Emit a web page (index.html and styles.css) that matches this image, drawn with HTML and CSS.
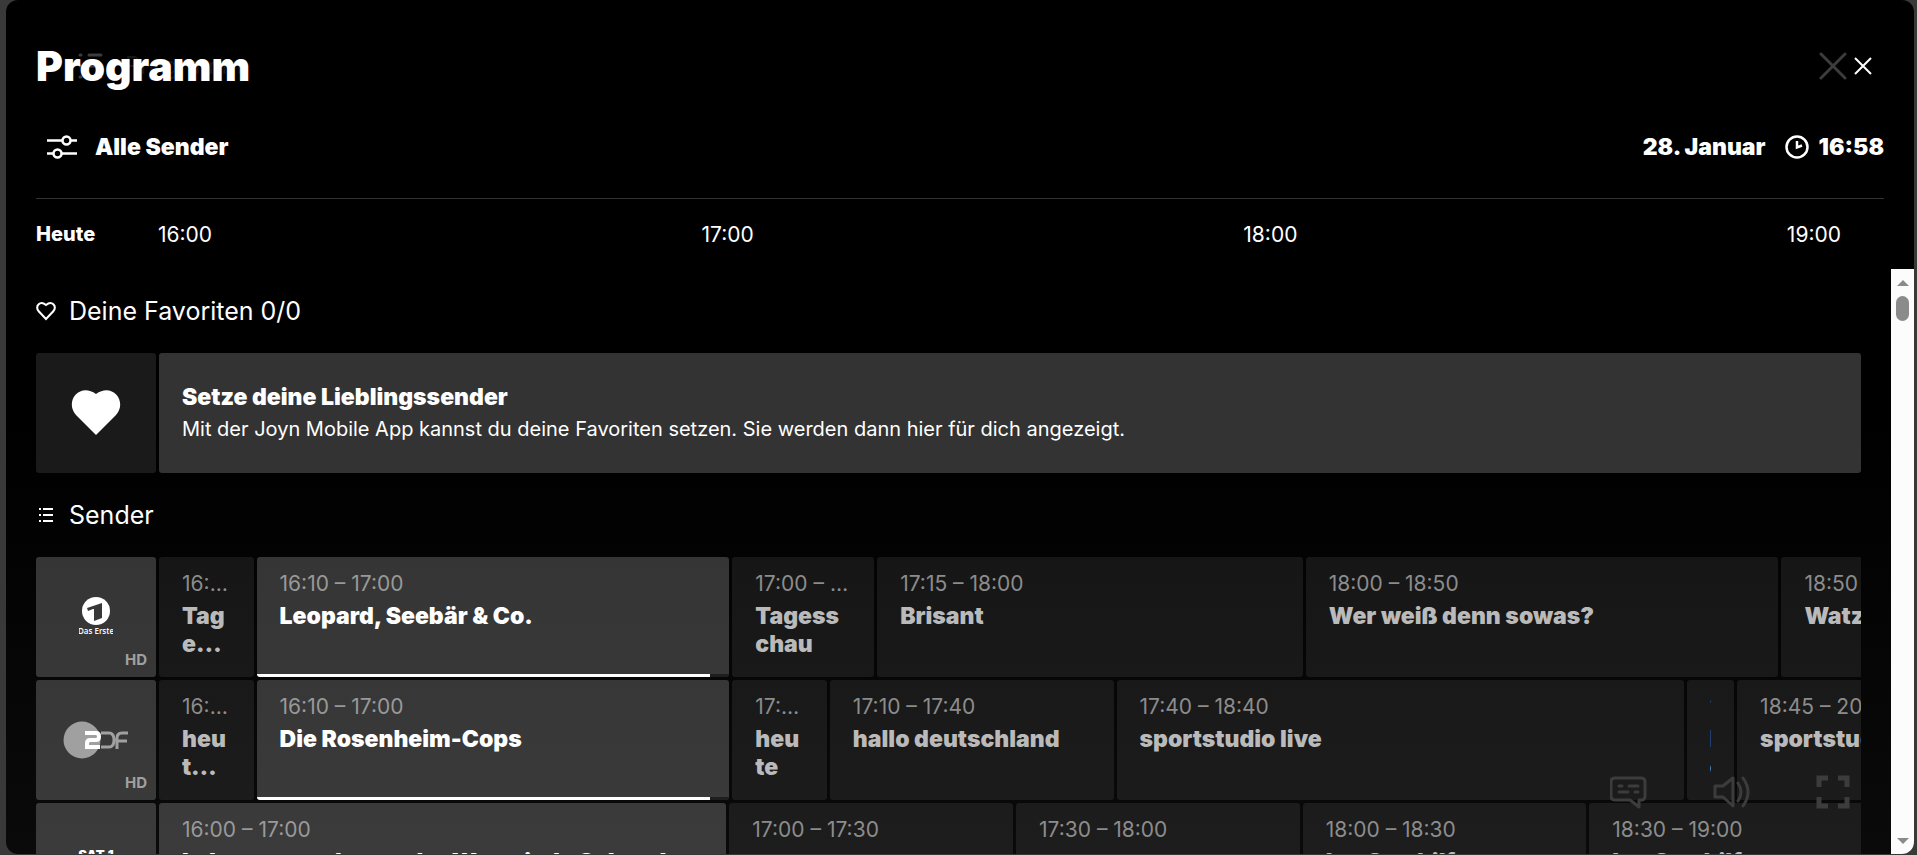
FILE: index.html
```html
<!DOCTYPE html>
<html lang="de">
  <head>
    <meta charset="UTF-8" />
    <meta name="viewport" content="width=device-width, initial-scale=1.0" />
    <title>Programm</title>
    <link rel="stylesheet" href="styles.css">
  </head>
  <body>
    <main class="panel">
      <header class="header">
        <div class="title_row">
          <h1 class="title">Programm</h1>
          <button class="close" aria-label="Schließen">
            <svg width="18" height="18" viewBox="0 0 18 18"><path d="M1 1l16 16M17 1L1 17" /></svg>
          </button>
        </div>
        <div class="filter_row">
          <button class="filter">
            <svg width="32" height="24" viewBox="0 0 32 24">
              <path d="M1 5.500h15M25 5.500h6M1 18.500h6M16 18.500h15" />
              <circle cx="20.500" cy="5.500" r="4" />
              <circle cx="11.500" cy="18.500" r="4" />
            </svg>
            <span>Alle Sender</span>
          </button>
          <div class="date">
            <span>28. Januar</span>
            <svg width="24" height="24" viewBox="0 0 24 24">
              <circle cx="12" cy="12" r="10.500" />
              <path d="M12 6v6.500l5-2" />
            </svg>
            <span>16:58</span>
          </div>
        </div>
        <div class="time_row">
          <span class="today">Heute</span>
          <div class="hours">
            <span>16:00</span>
            <span>17:00</span>
            <span>18:00</span>
            <span>19:00</span>
          </div>
        </div>
      </header>

      <div class="body">
        <div class="content">
          <h2 class="section">
            <svg width="20" height="20" viewBox="0 0 20 20"><path d="M10 18L2.500 10C-1 5 4-1 10 4 16-1 21 5 17.500 10z" /></svg>
            <span>Deine Favoriten 0/0</span>
          </h2>
          <div class="row">
            <div class="logo logo_dark">
              <svg width="50" height="46" viewBox="0 0 50 46"><path fill="#fff" d="M25 45L5 25C-7 11 9-8 25 4 41-8 57 11 45 25z" /></svg>
            </div>
            <div class="hint">
              <h3>Setze deine Lieblingssender</h3>
              <p>Mit der Joyn Mobile App kannst du deine Favoriten setzen. Sie werden dann hier für dich angezeigt.</p>
            </div>
          </div>

          <h2 class="section">
            <svg class="list" width="20" height="18" viewBox="0 0 20 18"><path d="M3 3h2M7 3h10M3 9h2M7 9h10M3 15h2M7 15h10" /></svg>
            <span>Sender</span>
          </h2>

          <div class="row">
            <div class="logo">
              <svg width="34" height="40" viewBox="0 0 34 40">
                <circle cx="17" cy="14" r="14" fill="#fff" />
                <path fill="#383838" d="M8 11l15-5v15l-8 3V12l-1 0v0l-5 2z" />
                <text x="17" y="37" text-anchor="middle">Das Erste</text>
              </svg>
              <span class="hd">HD</span>
            </div>
            <div class="lane">
              <div class="show" style="--min: 10"><span>16:00 – 16:10</span><h3>Tagesschau</h3></div>
              <div class="show live" style="--min: 50"><span>16:10 – 17:00</span><h3>Leopard, Seebär &amp; Co.</h3><div class="progress"></div></div>
              <div class="show" style="--min: 15"><span>17:00 – 17:15</span><h3>Tagesschau</h3></div>
              <div class="show" style="--min: 45"><span>17:15 – 18:00</span><h3>Brisant</h3></div>
              <div class="show" style="--min: 50"><span>18:00 – 18:50</span><h3>Wer weiß denn sowas?</h3></div>
              <div class="show" style="--min: 55"><span>18:50 – 19:45</span><h3>Watzmann ermittelt</h3></div>
            </div>
          </div>

          <div class="row">
            <div class="logo">
              <svg width="66" height="38" viewBox="0 0 66 38">
                <circle cx="19" cy="19" r="18.500" fill="#a0a0a0" />
                <g fill="none" stroke-width="3">
                  <path stroke="#a0a0a0" d="M38 12h8q5 0 5 7t-5 7h-8M54 28V17q0-5 5-5h6M54 20h10" />
                  <path stroke="#fff" stroke-width="4" d="M22 12h11q3 0 3 3.500t-3 3.500h-6q-3 0-3 3.500V26h13" />
                </g>
              </svg>
              <span class="hd">HD</span>
            </div>
            <div class="lane">
              <div class="show" style="--min: 10"><span>16:00 – 16:10</span><h3>heute Xpress</h3></div>
              <div class="show live" style="--min: 50"><span>16:10 – 17:00</span><h3>Die Rosenheim-Cops</h3><div class="progress"></div></div>
              <div class="show" style="--min: 10"><span>17:00 – 17:10</span><h3>heute</h3></div>
              <div class="show" style="--min: 30"><span>17:10 – 17:40</span><h3>hallo deutschland</h3></div>
              <div class="show" style="--min: 60"><span>17:40 – 18:40</span><h3>sportstudio live</h3></div>
              <div class="show" style="--min: 5"><span>18:40 – 18:45</span><h3>heute</h3></div>
              <div class="show" style="--min: 95"><span>18:45 – 20:20</span><h3>sportstudio live</h3></div>
            </div>
          </div>

          <div class="row">
            <div class="logo sat">
              <span>SAT.1</span>
              <svg width="24" height="14" viewBox="0 0 24 14"><circle cx="12" cy="7" r="7" fill="#fff" /></svg>
            </div>
            <div class="lane">
              <div class="show live" style="--min: 60"><span>16:00 – 17:00</span><h3>Lebensretter hautnah – Wenn jede Sekunde zählt</h3></div>
              <div class="show" style="--min: 30"><span>17:00 – 17:30</span></div>
              <div class="show" style="--min: 30"><span>17:30 – 18:00</span></div>
              <div class="show" style="--min: 30"><span>18:00 – 18:30</span><h3>Lenßen hilft</h3></div>
              <div class="show" style="--min: 30"><span>18:30 – 19:00</span><h3>Lenßen hilft</h3></div>
            </div>
          </div>
        </div>
        <div class="scrollbar" aria-hidden="true">
          <i class="arrow_up"></i>
          <i class="thumb"></i>
          <i class="arrow_down"></i>
        </div>
      </div>

      <!-- player controls behind the panel -->
      <div class="ghost ghost_title">
        <svg width="32" height="28" viewBox="0 0 32 28"><path d="M9 3h1M18 3h12M9 14h1M18 14h12M9 25h1M18 25h12" /></svg>
        <span>Programm</span>
      </div>
      <div class="ghost ghost_close">
        <svg width="28" height="28" viewBox="0 0 28 28"><path d="M2 2l24 24M26 2L2 26" /></svg>
      </div>
      <div class="ghost ghost_player">
        <svg width="38" height="34" viewBox="0 0 38 34"><path d="M5 3h26q4 0 4 4v14q0 4-4 4h-2v7l-9-7H5q-4 0-4-4V7q0-4 4-4zM9 11h3M19 11h9M9 17h9M25 17h3" /></svg>
        <svg width="38" height="34" viewBox="0 0 38 34"><path d="M2 11h8L20 3v28l-10-9H2zM25 8q6 9 0 18M30 3q10 14 0 28" /></svg>
        <svg class="full" width="34" height="34" viewBox="0 0 34 34"><path d="M3 12V3h9M22 3h9v9M31 22v9h-9M12 31H3v-9" /></svg>
      </div>
    </main>
  </body>
</html>
```
FILE: styles.css
```css
* {
  box-sizing: border-box;
}
body {
  margin: 0;
  padding: 0 3px 1px 6px;
  height: 100vh;
  overflow: hidden;
  background-color: #393939;
  color: #fff;
  font-family: Inter, "Open Sans", sans-serif;
}
h1, h2, h3, p {
  margin: 0;
}
button {
  border: none;
  padding: 0;
  background: none;
  color: inherit;
  font: inherit;
  cursor: pointer;
}
svg {
  display: block;
  flex: none;
  fill: none;
  stroke: #fff;
  stroke-width: 2;
}
.panel {
  position: relative;
  display: flex;
  flex-direction: column;
  height: 100%;
  overflow: hidden;
  border-radius: 12px;
  background: linear-gradient(#000 50%, #0a0a0a);
}

/* header */
.header {
  padding: 36px 30px 0;
}
.title_row,
.filter_row {
  display: flex;
  align-items: center;
  justify-content: space-between;
}
.title_row {
  position: relative;
  z-index: 1;
}
.title {
  font-size: 41px;
  line-height: 60px;
  font-weight: 900;
}
.close {
  padding: 12px;
}
.filter_row {
  height: 102px;
  font-size: 23px;
  font-weight: 900;
}
.filter {
  display: flex;
  align-items: center;
  gap: 17px;
  padding-left: 10px;
}
.date {
  display: flex;
  align-items: center;
  gap: 10px;
}
.date svg {
  margin-left: 9px;
}
.filter svg,
.date svg {
  stroke-width: 2.5;
}
.time_row {
  display: flex;
  align-items: center;
  height: 71px;
  border-top: 1px solid #333;
  font-size: 21px;
}
.today {
  flex: 0 0 122px;
  font-size: 20px;
  font-weight: 800;
}
.hours {
  display: flex;
  flex: 1;
  justify-content: space-between;
  padding-right: 43px;
}

/* programme list */
.body {
  display: flex;
  flex: 1;
  min-height: 0;
}
.content {
  flex: 1;
  min-width: 0;
  overflow: hidden;
  padding: 0 30px;
}
.section {
  display: flex;
  align-items: center;
  gap: 13px;
  height: 84px;
  font-size: 25px;
  line-height: 28px;
  font-weight: 400;
}
.row {
  display: flex;
  gap: 3px;
  height: 120px;
  margin-bottom: 3px;
}
.row + .section {
  margin-top: -3px;
}
.logo {
  position: relative;
  display: flex;
  flex: 0 0 120px;
  align-items: center;
  justify-content: center;
  border-radius: 3px;
  background-color: rgba(255, 255, 255, 0.2);
}
.logo svg {
  stroke: none;
}
.logo text {
  fill: #fff;
  font: 600 8px "Open Sans", sans-serif;
}
.logo_dark {
  background-color: rgba(255, 255, 255, 0.1);
}
.hd {
  position: absolute;
  right: 9px;
  bottom: 8px;
  color: #a0a0a0;
  font-size: 15px;
  font-weight: 700;
}
.sat {
  flex-direction: column;
  gap: 2px;
  font-size: 13px;
  line-height: 14px;
  font-weight: 900;
}
.hint {
  flex: 1;
  padding: 29px 23px;
  border-radius: 3px;
  background-color: rgba(255, 255, 255, 0.2);
}
.hint h3 {
  font-size: 23px;
  line-height: 31px;
  font-weight: 900;
}
.hint p {
  font-size: 20px;
  line-height: 32px;
}
/* one lane shows three hours */
.lane {
  display: flex;
  flex: 1;
  gap: 3px;
  min-width: 0;
  overflow: hidden;
}
.show {
  position: relative;
  flex: 0 0 calc(var(--min) / 180 * 100%);
  min-width: 0;
  overflow: hidden;
  padding: 13px 23px 0;
  border-radius: 3px;
  background-color: rgba(255, 255, 255, 0.08);
}
.show span {
  display: block;
  overflow: hidden;
  color: #8c8c8c;
  font-size: 21px;
  line-height: 28px;
  white-space: nowrap;
  text-overflow: ellipsis;
}
.show h3 {
  display: -webkit-box;
  overflow: hidden;
  margin-top: 4px;
  color: #bababa;
  font-size: 23px;
  line-height: 28px;
  font-weight: 900;
  word-break: break-word;
  -webkit-box-orient: vertical;
  -webkit-line-clamp: 2;
}
.live {
  background-color: rgba(255, 255, 255, 0.2);
}
.live span {
  color: #999;
}
.live h3 {
  color: #fff;
}
.progress {
  position: absolute;
  left: 0;
  right: 0;
  bottom: 0;
  height: 3px;
  background: linear-gradient(to right, #fff 96%, #1e1e1e 96%);
}

/* scrollbar */
.scrollbar {
  display: flex;
  flex: 0 0 23px;
  flex-direction: column;
  align-items: center;
  padding: 11px 0 10px;
  background-color: #fcfcfc;
}
.arrow_up,
.arrow_down {
  border: 6px solid transparent;
}
.arrow_up {
  border-top: none;
  border-bottom-color: #8b8b8b;
}
.arrow_down {
  margin-top: auto;
  border-bottom: none;
  border-top-color: #8b8b8b;
}
.thumb {
  width: 13px;
  height: 25px;
  margin-top: 10px;
  border-radius: 7px;
  background-color: #8b8b8b;
}

/* faded player icons */
.ghost {
  position: absolute;
  display: flex;
  pointer-events: none;
}
.ghost svg {
  stroke: #3c3c3c;
  stroke-width: 3;
  stroke-linecap: round;
  stroke-linejoin: round;
}
.ghost_title {
  top: 52px;
  left: 65px;
  align-items: center;
  gap: 22px;
  color: #161616;
  font-size: 24px;
  line-height: 28px;
}
.ghost_close {
  top: 52px;
  right: 67px;
}
.ghost_player {
  right: 64px;
  bottom: 45px;
  gap: 65px;
}
.ghost .full {
  stroke-width: 5;
  stroke-linecap: butt;
  stroke-linejoin: miter;
}
```
